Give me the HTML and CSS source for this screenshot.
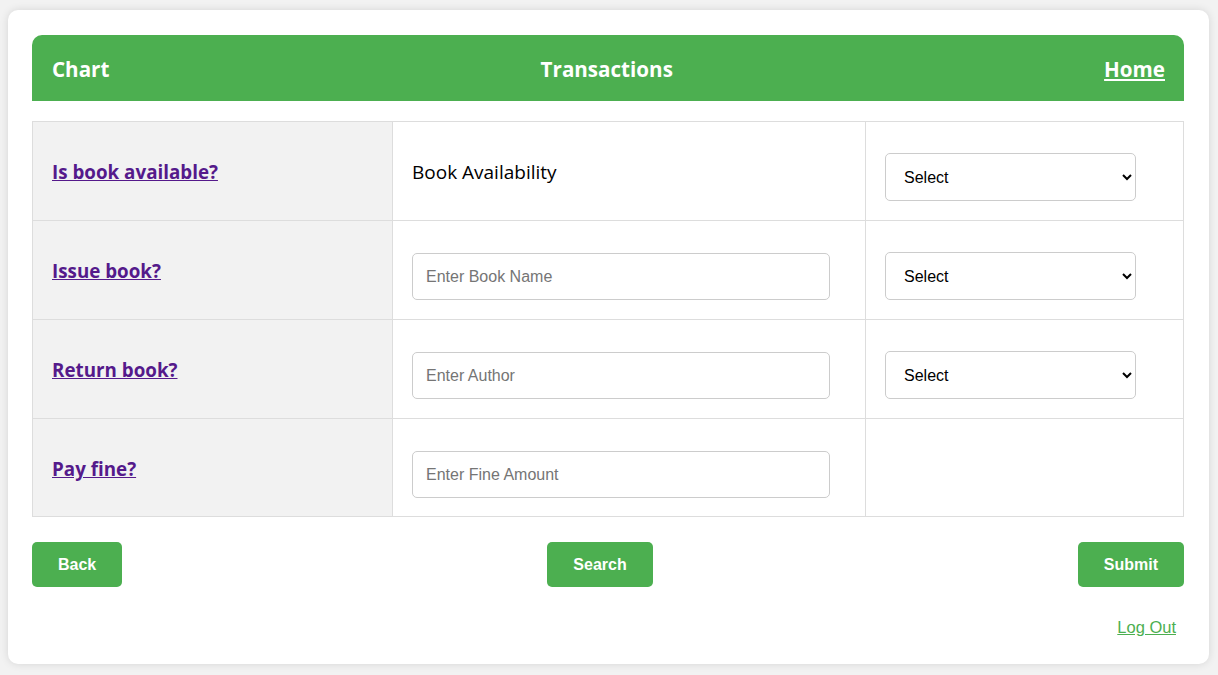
FILE: index.html
```html
<!DOCTYPE html>
<html lang="en">
<head>
<meta charset="utf-8">
<title>Transactions</title>
<link rel="stylesheet" href="styles.css">
</head>
<body>
<div class="container">
  <div class="header">
    <span class="h-left">Chart</span>
    <span class="h-center">Transactions</span>
    <a class="h-right" href="#">Home</a>
  </div>
  <table class="grid">
    <colgroup>
      <col class="c1"><col class="c2"><col class="c3">
    </colgroup>
    <tr>
      <td class="label"><a href="#">Is book available?</a></td>
      <td class="text">Book Availability</td>
      <td><select class="sel"><option>Select</option></select></td>
    </tr>
    <tr>
      <td class="label"><a href="#">Issue book?</a></td>
      <td><input class="inp" type="text" placeholder="Enter Book Name"></td>
      <td><select class="sel"><option>Select</option></select></td>
    </tr>
    <tr>
      <td class="label"><a href="#">Return book?</a></td>
      <td><input class="inp" type="text" placeholder="Enter Author"></td>
      <td><select class="sel"><option>Select</option></select></td>
    </tr>
    <tr class="last">
      <td class="label"><a href="#">Pay fine?</a></td>
      <td><input class="inp" type="text" placeholder="Enter Fine Amount"></td>
      <td></td>
    </tr>
  </table>
  <div class="actions">
    <button class="btn">Back</button>
    <button class="btn">Search</button>
    <button class="btn">Submit</button>
  </div>
  <div class="footer">
    <a class="logout" href="#">Log Out</a>
  </div>
</div>
</body>
</html>
```

FILE: styles.css
```css
html, body {
  margin: 0;
  padding: 0;
}
body {
  background: #f2f2f2;
  font-family: "Open Sans", "Noto Sans", sans-serif;
  padding: 10px 9px 11px 8px;
}
.container {
  background: #fff;
  border-radius: 10px;
  box-shadow: 0 0 8px rgba(0,0,0,0.12);
  padding: 25px 25px 26px 24px;
  height: 603px;
}
.header {
  background: #4CAF50;
  color: #fff;
  border-radius: 10px 10px 0 0;
  height: 66px;
  padding: 0 19px 0 20px;
  display: flex;
  align-items: center;
  justify-content: space-between;
  font-weight: 700;
  font-size: 20.6px;
}
.header span,
.header a {
  position: relative;
  top: 1px;
}
.header .h-right {
  color: #fff;
  text-decoration: underline;
}
.grid {
  margin-top: 20px;
  width: 100%;
  border-collapse: collapse;
  table-layout: fixed;
}
.c1 { width: 360px; }
.c2 { width: 473px; }
.grid td {
  border: 1px solid #ddd;
  padding: 21px 19px 19px;
  height: 58px;
  vertical-align: middle;
}
.grid tr.last td {
  padding-bottom: 18px;
}
.grid td.label {
  background: #f2f2f2;
}
.grid td.label a {
  color: #551A8B;
  font-weight: 700;
  font-size: 18.8px;
}
.grid td.text {
  font-size: 19px;
  color: #000;
}
.inp {
  box-sizing: border-box;
  margin-top: 11px;
  display: block;
  width: 418px;
  height: 47px;
  padding: 0 13px;
  border: 1px solid #ccc;
  border-radius: 5px;
  font-family: "Liberation Sans", Arial, sans-serif;
  font-size: 16px;
}
.inp::placeholder {
  color: #757575;
}
.sel {
  box-sizing: border-box;
  margin-top: 10px;
  display: block;
  width: 251px;
  height: 48px;
  padding: 0 14px;
  border: 1px solid #ccc;
  border-radius: 5px;
  background: #fff;
  color: #000;
  font-family: "Liberation Sans", Arial, sans-serif;
  font-size: 16px;
}
.actions {
  margin-top: 25px;
  display: flex;
  justify-content: space-between;
}
.btn {
  background: #4CAF50;
  color: #fff;
  border: none;
  border-radius: 5px;
  height: 45px;
  padding: 0 26px;
  font-family: "Liberation Sans", Arial, sans-serif;
  font-weight: 700;
  font-size: 16px;
}
.footer {
  margin-top: 31px;
  display: flex;
  justify-content: flex-end;
  padding-right: 8px;
}
.logout {
  color: #4CAF50;
  font-family: "Liberation Sans", Arial, sans-serif;
  font-size: 16.5px;
}
```
